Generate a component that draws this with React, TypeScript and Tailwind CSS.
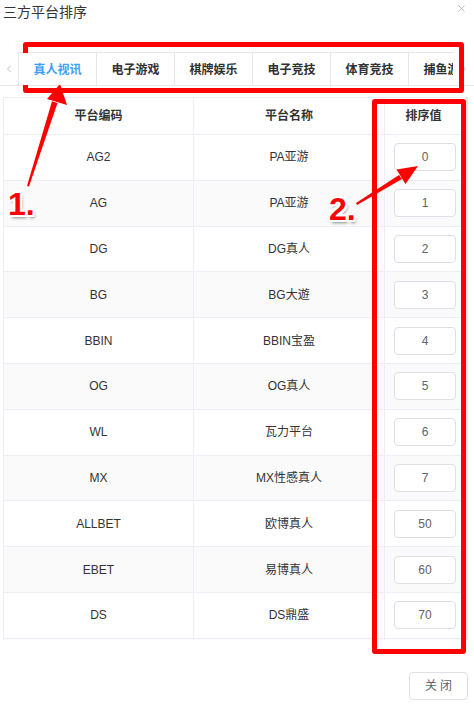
import React from 'react';
import { ChevronLeft, ChevronRight, X } from 'lucide-react';

const tabs = ['真人视讯', '电子游戏', '棋牌娱乐', '电子竞技', '体育竞技', '捕鱼游戏'];

const rows = [
  { code: 'AG2', name: 'PA亚游', sort: 0 },
  { code: 'AG', name: 'PA亚游', sort: 1 },
  { code: 'DG', name: 'DG真人', sort: 2 },
  { code: 'BG', name: 'BG大遊', sort: 3 },
  { code: 'BBIN', name: 'BBIN宝盈', sort: 4 },
  { code: 'OG', name: 'OG真人', sort: 5 },
  { code: 'WL', name: '瓦力平台', sort: 6 },
  { code: 'MX', name: 'MX性感真人', sort: 7 },
  { code: 'ALLBET', name: '欧博真人', sort: 50 },
  { code: 'EBET', name: '易博真人', sort: 60 },
  { code: 'DS', name: 'DS鼎盛', sort: 70 },
];

const labelCls =
  "absolute font-bold text-[32px] leading-none text-[#ff0000] font-['Liberation_Sans',sans-serif] [text-shadow:-2px_0_#fff,2px_0_#fff,0_2px_#fff,0_-2px_#fff,-2px_-2px_#fff,2px_2px_#fff,-2px_2px_#fff,2px_-2px_#fff,2px_3px_3px_#888]";

const App = () => {
  return (
    <div className="relative w-[474px] h-[705px] overflow-hidden bg-white text-[#333] font-['Liberation_Sans','Noto_Sans_CJK_SC',sans-serif]">
      {/* title */}
      <div className="flex items-start justify-between h-[24px]">
        <div className="pl-[3px] text-[14px] leading-[24px] text-[#333]">三方平台排序</div>
        <X size={11} strokeWidth={1.5} className="mt-[3px] mr-[7px] text-[#aaa]" />
      </div>

      {/* tabs */}
      <div className="mt-[28px] flex h-[34px] border-b border-[#e4e7ed]">
        <div className="w-[18px] flex items-center justify-center text-[#c0c4cc]">
          <ChevronLeft size={12} />
        </div>
        <div className="w-[435px] overflow-hidden">
          <div className="flex w-max border-t border-[#e4e7ed] h-[34px]">
            {tabs.map((t, i) => (
              <div
                key={t}
                className={
                  'w-[78px] shrink-0 h-[34px] border-l border-[#e4e7ed] flex items-center justify-center text-[12px] font-bold ' +
                  (i === 0 ? 'text-[#409eff] bg-white relative z-10 border-b border-b-white' : 'text-[#303133]')
                }
              >
                {t}
              </div>
            ))}
          </div>
        </div>
        <div className="flex-1 flex items-center justify-center text-[#c0c4cc]">
          <ChevronRight size={12} />
        </div>
      </div>

      {/* table */}
      <div className="mt-[11px] flex">
        <div className="ml-[3px] w-[459px] h-[543px] overflow-hidden border-l border-t border-[#ebeef5]">
          <div className="grid grid-cols-[190px_191px_78px] h-[37px] border-b border-[#ebeef5] text-[12px] font-bold text-[#333]">
            <div className="flex items-center justify-center border-r border-[#ebeef5]">平台编码</div>
            <div className="flex items-center justify-center border-r border-[#ebeef5]">平台名称</div>
            <div className="flex items-center justify-center border-r border-[#ebeef5]">排序值</div>
          </div>
          {rows.map((r, i) => (
            <div
              key={r.code}
              className={
                'grid grid-cols-[190px_191px_78px] h-[45.8px] border-b border-[#ebeef5] text-[12px] text-[#333] ' +
                (i % 2 === 1 ? 'bg-[#fafafa]' : 'bg-white')
              }
            >
              <div className="flex items-center justify-center border-r border-[#ebeef5]">{r.code}</div>
              <div className="flex items-center justify-center border-r border-[#ebeef5]">{r.name}</div>
              <div className="flex items-center justify-center border-r border-[#ebeef5] pl-[9px] pr-[6px]">
                <div className="w-[63px] h-[28px] rounded-[4px] border border-[#dcdfe6] bg-white flex items-center justify-center text-[#606266]">
                  {r.sort}
                </div>
              </div>
            </div>
          ))}
          {/* next row, scrolled out of view */}
          <div className="grid grid-cols-[190px_191px_78px] h-[45.8px] bg-[#fafafa]">
            <div className="border-r border-[#ebeef5]" />
            <div className="border-r border-[#ebeef5]" />
            <div className="border-r border-[#ebeef5]" />
          </div>
        </div>
        <div className="ml-[3px] w-[3px] h-[543px] bg-[#e5e7eb]" />
      </div>

      {/* footer */}
      <div className="mt-[32px] flex justify-end pr-[6px]">
        <button className="w-[59px] h-[28px] rounded-[4px] border border-[#dcdfe6] bg-white text-[12px] text-[#606266] tracking-[3px] pl-[3px]">
          关闭
        </button>
      </div>

      {/* annotations */}
      <div className="absolute left-[23px] top-[42px] w-[441px] h-[51px] border-[5px] border-[#ff0000] rounded-[3px]" />
      <div className="absolute left-[372px] top-[99px] w-[94px] h-[555px] border-[5px] border-[#ff0000] rounded-[3px]" />
      <svg className="absolute inset-0 pointer-events-none" width="474" height="705">
        <polygon points="27,186 29,186.6 57.5,103 52,101.3" fill="#ff0000" />
        <polygon points="60,84 67,105 47,99" fill="#ff0000" />
        <polygon points="356,203 357,205 402,179 399,175" fill="#ff0000" />
        <polygon points="418,166 405.5,184 396.5,169.5" fill="#ff0000" />
      </svg>
      <div className={labelCls + ' left-[8px] top-[188px]'}>1.</div>
      <div className={labelCls + ' left-[329px] top-[193px]'}>2.</div>
    </div>
  );
};

export default App;
